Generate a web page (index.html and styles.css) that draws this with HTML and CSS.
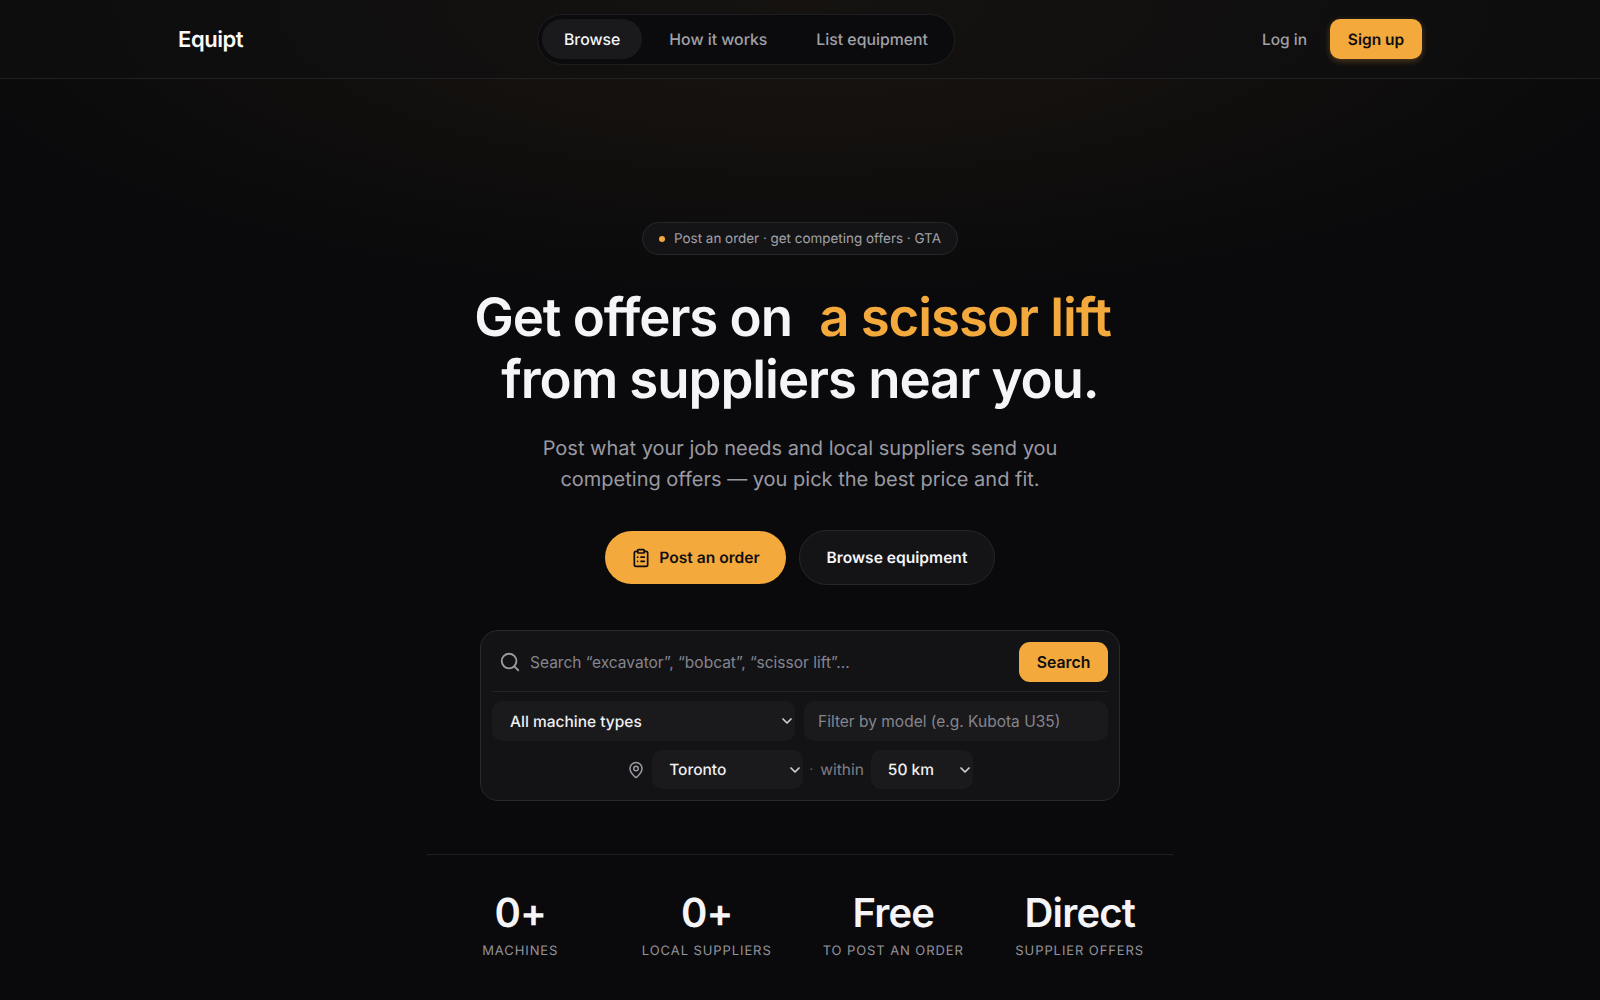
FILE: index.html
```html
<!DOCTYPE html>
<html lang="en">
<head>
<meta charset="utf-8">
<title>Equipt</title>
<link rel="stylesheet" href="styles.css">
</head>
<body>
<header class="nav">
  <div class="nav-inner">
    <a class="logo" href="#">Equipt</a>
    <nav class="nav-pill">
      <a class="nav-link active" href="#">Browse</a>
      <a class="nav-link" href="#">How it works</a>
      <a class="nav-link" href="#">List equipment</a>
    </nav>
    <div class="nav-actions">
      <a class="login" href="#">Log in</a>
      <a class="signup" href="#">Sign up</a>
    </div>
  </div>
</header>
<main class="hero">
  <div class="badge"><span class="dot"></span>Post an order · get competing offers · GTA</div>
  <h1 class="title">Get offers on <span class="accent">a scissor lift</span><br>from suppliers near you.</h1>
  <p class="sub">Post what your job needs and local suppliers send you<br>competing offers — you pick the best price and fit.</p>
  <div class="cta">
    <a class="btn btn-primary" href="#">
      <svg class="btn-icon" viewBox="0 0 24 24" fill="none" stroke="currentColor" stroke-width="2" stroke-linecap="round" stroke-linejoin="round"><rect x="8" y="2" width="8" height="4" rx="1"/><path d="M16 4h2a2 2 0 0 1 2 2v14a2 2 0 0 1-2 2H6a2 2 0 0 1-2-2V6a2 2 0 0 1 2-2h2"/><path d="M12 11h4"/><path d="M12 16h4"/><path d="M8 11h.01"/><path d="M8 16h.01"/></svg>
      Post an order
    </a>
    <a class="btn btn-ghost" href="#">Browse equipment</a>
  </div>
  <section class="card">
    <div class="search-row">
      <svg class="search-icon" viewBox="0 0 24 24" fill="none" stroke="currentColor" stroke-width="2" stroke-linecap="round" stroke-linejoin="round"><circle cx="11" cy="11" r="8"/><path d="m21 21-4.3-4.3"/></svg>
      <input class="search-input" type="text" placeholder="Search “excavator”, “bobcat”, “scissor lift”...">
      <button class="search-btn" type="button">Search</button>
    </div>
    <div class="filter-row">
      <div class="select select-type"><span>All machine types</span><svg class="chev" viewBox="0 0 24 24" fill="none" stroke="currentColor" stroke-width="2.5" stroke-linecap="round" stroke-linejoin="round"><path d="m6 9 6 6 6-6"/></svg></div>
      <input class="model-input" type="text" placeholder="Filter by model (e.g. Kubota U35)">
    </div>
    <div class="loc-row">
      <svg class="pin" viewBox="0 0 24 24" fill="none" stroke="currentColor" stroke-width="2" stroke-linecap="round" stroke-linejoin="round"><path d="M20 10c0 5-5.5 10.2-7.4 11.8a1 1 0 0 1-1.2 0C9.5 20.2 4 15 4 10a8 8 0 0 1 16 0"/><circle cx="12" cy="10" r="3"/></svg>
      <div class="select select-city"><span>Toronto</span><svg class="chev" viewBox="0 0 24 24" fill="none" stroke="currentColor" stroke-width="2.5" stroke-linecap="round" stroke-linejoin="round"><path d="m6 9 6 6 6-6"/></svg></div>
      <span class="sep">·</span>
      <span class="within">within</span>
      <div class="select select-km"><span>50 km</span><svg class="chev" viewBox="0 0 24 24" fill="none" stroke="currentColor" stroke-width="2.5" stroke-linecap="round" stroke-linejoin="round"><path d="m6 9 6 6 6-6"/></svg></div>
    </div>
  </section>
  <section class="stats">
    <div class="stat"><div class="stat-value">0+</div><div class="stat-label">Machines</div></div>
    <div class="stat"><div class="stat-value">0+</div><div class="stat-label">Local suppliers</div></div>
    <div class="stat"><div class="stat-value">Free</div><div class="stat-label">To post an order</div></div>
    <div class="stat"><div class="stat-value">Direct</div><div class="stat-label">Supplier offers</div></div>
  </section>
</main>
</body>
</html>
```
FILE: styles.css
```css
* { box-sizing: border-box; }
html, body { margin: 0; height: 1000px; overflow: hidden; }
body {
  background:
    radial-gradient(ellipse 900px 300px at 50% 0, rgba(245, 170, 60, 0.07), rgba(245, 170, 60, 0) 100%),
    #0a0a0c;
  color: #f5f5f7;
  font-family: Inter, "Liberation Sans", sans-serif;
  text-rendering: geometricPrecision;
}
a { text-decoration: none; color: inherit; }
.nav { height: 79px; border-bottom: 1px solid #212124; background: rgba(16, 16, 18, 0.45); }
.nav-inner {
  height: 78px;
  padding: 0 178px;
  display: flex;
  align-items: center;
}
.logo { width: 359px; flex: none; padding-top: 1px; font-size: 22px; font-weight: 600; letter-spacing: -0.02em; color: #fafafa; }
.nav-pill {
  display: flex;
  align-items: center;
  gap: 5px;
  height: 51px;
  padding: 0 4px;
  border: 1px solid #1e1e22;
  border-radius: 26px;
  background: #0b0b0e;
}
.nav-link {
  display: flex;
  align-items: center;
  height: 40px;
  padding: 0 22px;
  border-radius: 20px;
  font-size: 15.8px;
  font-weight: 500;
  color: #a1a1a8;
}
.nav-link.active { background: #1a1a1d; color: #f5f5f7; }
.nav-actions { display: flex; align-items: center; gap: 23px; margin-left: auto; }
.login { font-size: 15.5px; font-weight: 500; color: #a1a1a8; }
.signup {
  display: flex;
  align-items: center;
  justify-content: center;
  width: 92px;
  height: 40px;
  border-radius: 10px;
  background: #f4a93d;
  color: #0e0e10;
  font-size: 15.5px;
  font-weight: 600;
  box-shadow: 0 2px 6px rgba(244, 169, 61, 0.3);
}
.hero { display: flex; flex-direction: column; align-items: center; padding-top: 143px; }
.badge {
  display: flex;
  align-items: center;
  width: 316px;
  height: 33px;
  padding: 0 16px;
  gap: 9px;
  border: 1px solid #27272b;
  border-radius: 17px;
  background: #141417;
  color: #a1a1a8;
  font-size: 13.45px;
  font-weight: 400;
  white-space: nowrap;
}
.dot { width: 6px; height: 6px; border-radius: 50%; background: #f4a93d; flex: none; }
.title {
  margin: 31px 0 0;
  font-size: 52.8px;
  line-height: 62px;
  font-weight: 600;
  letter-spacing: -0.02em;
  text-align: center;
  color: #f5f5f7;
}
.accent { color: #f4a93d; margin-left: 15px; margin-right: 15px; }
.sub {
  margin: 23px 0 0;
  font-size: 20px;
  line-height: 31px;
  color: #9a9aa2;
  text-align: center;
}
.cta { display: flex; align-items: center; gap: 13px; margin-top: 35px; }
.btn {
  display: flex;
  align-items: center;
  justify-content: center;
  border-radius: 28px;
  font-size: 15.6px;
  font-weight: 600;
}
.btn-primary { width: 181px; height: 53px; gap: 8px; background: #f4a93d; color: #0e0e10; }
.btn-icon { width: 20px; height: 20px; }
.btn-ghost { width: 196px; height: 55px; border: 1px solid #27272b; background: #141417; color: #f5f5f7; }
.card {
  width: 640px;
  height: 171px;
  margin-top: 45px;
  padding: 11px;
  border: 1px solid #2a2a2e;
  border-radius: 18px;
  background: #131316;
  display: flex;
  flex-direction: column;
}
.search-row {
  display: flex;
  align-items: center;
  height: 50px;
  padding-bottom: 10px;
  border-bottom: 1px solid #232327;
  flex: none;
}
.search-icon { width: 22px; height: 22px; margin-left: 7px; color: #9a9aa2; flex: none; }
.search-input {
  flex: 1;
  min-width: 0;
  margin-left: 9px;
  padding: 2px 0 0;
  border: 0;
  outline: 0;
  background: transparent;
  font: 400 15.5px Inter, "Liberation Sans", sans-serif;
  color: #f5f5f7;
}
.search-input::placeholder, .model-input::placeholder { color: #85858d; opacity: 1; }
.search-btn {
  width: 89px;
  height: 40px;
  padding: 2px 0 0;
  border: 0;
  border-radius: 11px;
  background: #f4a93d;
  color: #0e0e10;
  font: 600 15.8px Inter, "Liberation Sans", sans-serif;
}
.filter-row { display: flex; gap: 9px; margin-top: 9px; height: 40px; flex: none; }
.select {
  display: flex;
  align-items: center;
  justify-content: space-between;
  height: 100%;
  border-radius: 10px;
  background: #1a1a1d;
  color: #f0f0f2;
  font-size: 15.5px;
  font-weight: 500;
  padding: 0 0 0 18px;
}
.select-type { width: 303px; }
.model-input {
  flex: 1;
  min-width: 0;
  height: 100%;
  padding: 0 14px;
  border: 0;
  outline: 0;
  border-radius: 10px;
  background: #1a1a1d;
  font: 400 15.5px Inter, "Liberation Sans", sans-serif;
  color: #f5f5f7;
}
.chev { width: 16px; height: 16px; color: #d4d4d8; flex: none; }
.loc-row { display: flex; align-items: center; justify-content: center; height: 39px; margin-top: 9px; flex: none; }
.pin { width: 18px; height: 18px; color: #9a9aa2; margin-right: 7px; flex: none; }
.select-city { width: 151px; padding-left: 17px; }
.select-km { width: 102px; padding-left: 17px; }
.sep { color: #55555c; font-size: 14px; margin: 0 7px 0 6px; }
.within { color: #7f7f87; font-size: 15.5px; margin-right: 7px; }
.stats {
  width: 746px;
  margin-top: 53px;
  padding-top: 36px;
  border-top: 1px solid #1f1f22;
  display: grid;
  grid-template-columns: repeat(4, 1fr);
}
.stat { text-align: center; }
.stat-value { font-size: 40px; line-height: 44px; font-weight: 600; letter-spacing: -0.02em; color: #f5f5f7; }
.stat-label {
  margin-top: 7px;
  font-size: 13px;
  line-height: 18px;
  letter-spacing: 0.07em;
  text-transform: uppercase;
  color: #93939b;
}
```
